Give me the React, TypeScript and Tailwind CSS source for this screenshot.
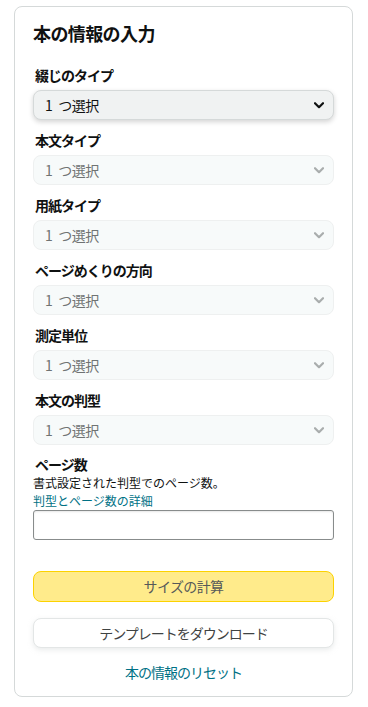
import React from "react";

const font = { fontFamily: '"Noto Sans CJK JP", "Noto Sans", sans-serif' };

function Chevron({ dark }: { dark?: boolean }) {
  return (
    <svg width="10" height="7" viewBox="0 0 10 7" className="shrink-0">
      <path
        d="M1 1.2 L5 5.2 L9 1.2"
        fill="none"
        stroke={dark ? "#0f1111" : "#a9adad"}
        strokeWidth="2.2"
        strokeLinecap="round"
        strokeLinejoin="round"
      />
    </svg>
  );
}

function Field({ label, active }: { label: string; active?: boolean }) {
  return (
    <div className="flex flex-col">
      <div className="h-[20px] leading-[20px] text-[14px] font-bold text-[#0f1111] tracking-[-1px] pl-[2px] mb-[5px]">
        {label}
      </div>
      {active ? (
        <div className="h-[30px] rounded-[8px] border border-[#d5d9d9] bg-[#f0f2f2] shadow-[0_2px_5px_rgba(15,17,17,0.18)] flex items-center justify-between pl-[11px] pr-[9px] mb-[10px]">
          <span className="text-[14px] text-[#0f1111] tracking-[-0.5px]">
            1<span className="pl-[6px]">つ選択</span>
          </span>
          <Chevron dark />
        </div>
      ) : (
        <div className="h-[30px] rounded-[8px] border border-[#eef0f0] bg-[#f7fafa] flex items-center justify-between pl-[11px] pr-[9px] mb-[10px]">
          <span className="text-[14px] text-[#6f7373] tracking-[-0.5px]">
            1<span className="pl-[6px]">つ選択</span>
          </span>
          <Chevron />
        </div>
      )}
    </div>
  );
}

export default function App() {
  return (
    <div className="bg-white min-h-[707px] px-[14px] pt-[6px]" style={font}>
      <div className="w-[339px] rounded-[8px] border border-[#d5d9d9] px-[18px] pt-[14px] pb-[14px] flex flex-col">
        <h1 className="text-[18px] leading-[24px] font-bold text-[#0f1111] tracking-[-0.6px] mb-[20px]">
          本の情報の入力
        </h1>
        <Field label="綴じのタイプ" active />
        <Field label="本文タイプ" />
        <Field label="用紙タイプ" />
        <Field label="ページめくりの方向" />
        <Field label="測定単位" />
        <Field label="本文の判型" />
        <div className="flex flex-col -mt-[1px]">
          <div className="h-[20px] leading-[20px] text-[14px] font-bold text-[#0f1111] tracking-[-1px] pl-[2px]">
            ページ数
          </div>
          <div className="h-[18px] leading-[18px] text-[12px] text-[#0f1111] tracking-[0px]">
            書式設定された判型でのページ数。
          </div>
          <a className="block h-[18px] leading-[18px] text-[12px] text-[#007185] tracking-[0px]">
            判型とページ数の詳細
          </a>
          <div className="h-[30px] rounded-[3px] border border-[#888c8c] bg-white shadow-[inset_0_1px_2px_rgba(15,17,17,0.1)]" />
        </div>
        <button className="mt-[31px] h-[31px] rounded-[8px] border border-[#fcd200] bg-[#ffeb8b] text-[14px] text-[#565959] tracking-[-0.6px] flex items-center justify-center">
          サイズの計算
        </button>
        <button className="mt-[16px] h-[30px] rounded-[8px] border border-[#e3e6e6] bg-white shadow-[0_2px_5px_rgba(213,217,217,0.5)] text-[14px] text-[#3f4343] tracking-[-1px] flex items-center justify-center">
          テンプレートをダウンロード
        </button>
        <div className="mt-[14px] h-[20px] leading-[20px] text-center text-[14px] text-[#007185] tracking-[-1px]">
          本の情報のリセット
        </div>
      </div>
    </div>
  );
}
